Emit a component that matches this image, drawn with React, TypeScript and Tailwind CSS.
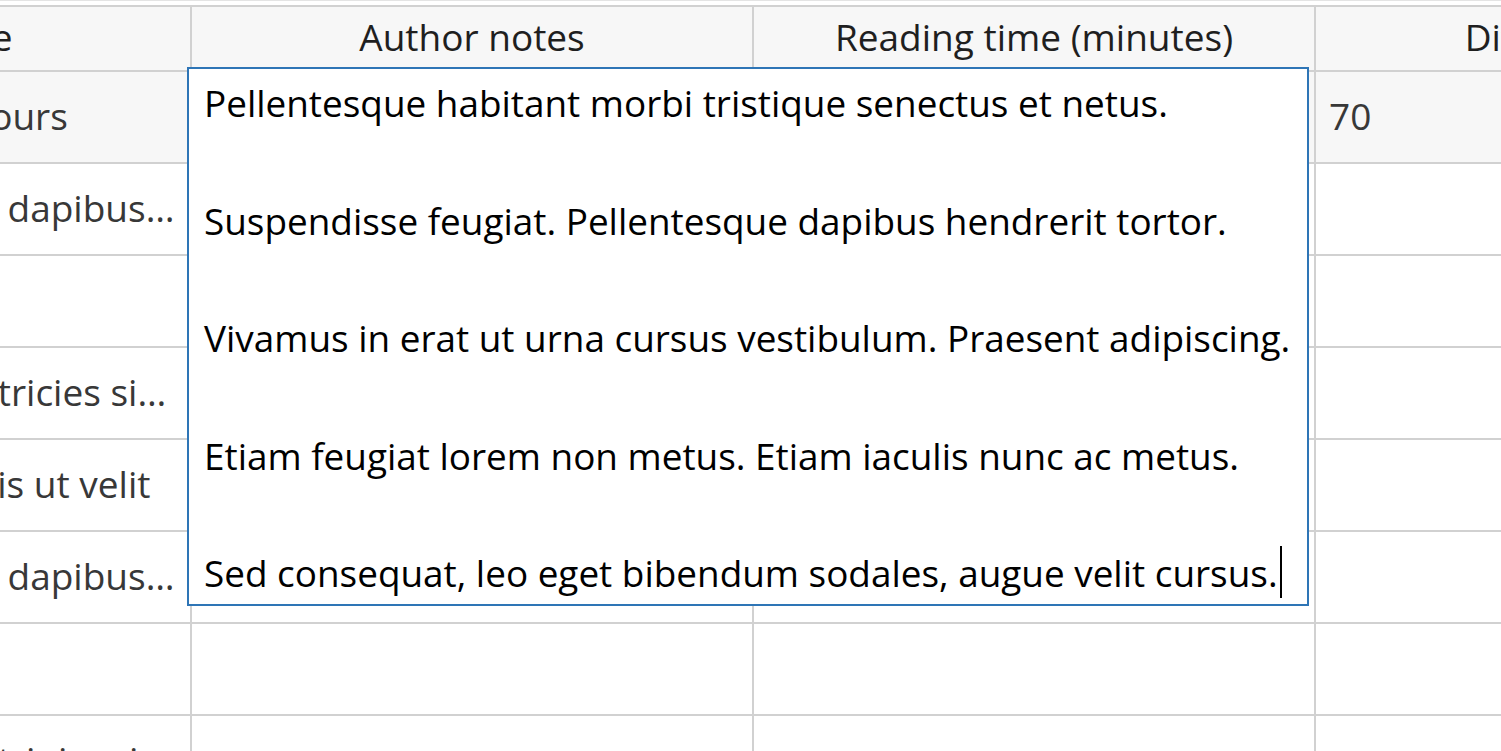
import React from "react";

type Row = {
  title: string;
  notes: string;
  reading: string;
  difficulty: string;
};

const columns = [
  { key: "title", label: "Title" },
  { key: "notes", label: "Author notes" },
  { key: "reading", label: "Reading time (minutes)" },
  { key: "difficulty", label: "Difficulty rating" },
] as const;

const editingNotes = [
  "Pellentesque habitant morbi tristique senectus et netus.",
  "Suspendisse feugiat. Pellentesque dapibus hendrerit tortor.",
  "Vivamus in erat ut urna cursus vestibulum. Praesent adipiscing.",
  "Etiam feugiat lorem non metus. Etiam iaculis nunc ac metus.",
  "Sed consequat, leo eget bibendum sodales, augue velit cursus.",
].join("\n\n");

const rows: Row[] = [
  { title: "Nearly five hours", notes: editingNotes, reading: "25", difficulty: "70" },
  { title: "Pellentesque dapibus…", notes: "", reading: "", difficulty: "" },
  { title: "", notes: "", reading: "", difficulty: "" },
  { title: "Donec nec ultricies si…", notes: "", reading: "", difficulty: "" },
  { title: "Mauris sagittis ut velit", notes: "", reading: "", difficulty: "" },
  { title: "Pellentesque dapibus…", notes: "", reading: "", difficulty: "" },
  { title: "", notes: "", reading: "", difficulty: "" },
  { title: "Donec nec ultrinis mi…", notes: "", reading: "", difficulty: "" },
];

function NotesEditor({ value }: { value: string }) {
  return (
    <div className="absolute left-[-5px] top-[-5px] z-10 w-[1122px] h-[539px] border-2 border-[#2e75b6] bg-white pl-[15px] pt-[5px] overflow-hidden">
      <div className="whitespace-pre text-[36.9px] leading-[58.75px] text-black">
        {value}
        <span className="inline-block w-[2px] h-[52px] ml-[2px] bg-black align-[-11px]" />
      </div>
    </div>
  );
}

export default function App() {
  return (
    <div className="w-full h-screen overflow-hidden bg-white font-['Open_Sans',sans-serif] text-[37px]">
      {/* thin toolbar edge above the grid */}
      <div className="h-[1px] bg-[#e4e4e4]" />
      <div className="h-[4px]" />

      {/* grid, scrolled horizontally so the first column is cut off */}
      <div className="-ml-[238px] w-max border-t-2 border-[#d1d1d1]">
        <div className="grid grid-cols-[430px_562px_562px_562px]">
          {columns.map((col) => (
            <div
              key={col.key}
              className="h-[65px] flex items-center justify-center pb-[3px] px-[13px] bg-[#f7f7f7] border-r-2 border-b-2 border-[#d1d1d1] text-[#1f1f1f] whitespace-nowrap overflow-hidden"
            >
              {col.label}
            </div>
          ))}

          {rows.map((row, i) =>
            columns.map((col) => (
              <div
                key={`${i}-${col.key}`}
                className={`relative h-[92px] flex items-center pb-[3px] px-[13px] border-r-2 border-b-2 border-[#d1d1d1] text-[#383838] whitespace-nowrap ${
                  i === 0 ? "bg-[#f7f7f7]" : "bg-white"
                } ${i === 0 && col.key === "notes" ? "" : "overflow-hidden"}`}
              >
                {i === 0 && col.key === "notes" ? (
                  <NotesEditor value={row.notes} />
                ) : (
                  row[col.key]
                )}
              </div>
            ))
          )}
        </div>
      </div>
    </div>
  );
}
